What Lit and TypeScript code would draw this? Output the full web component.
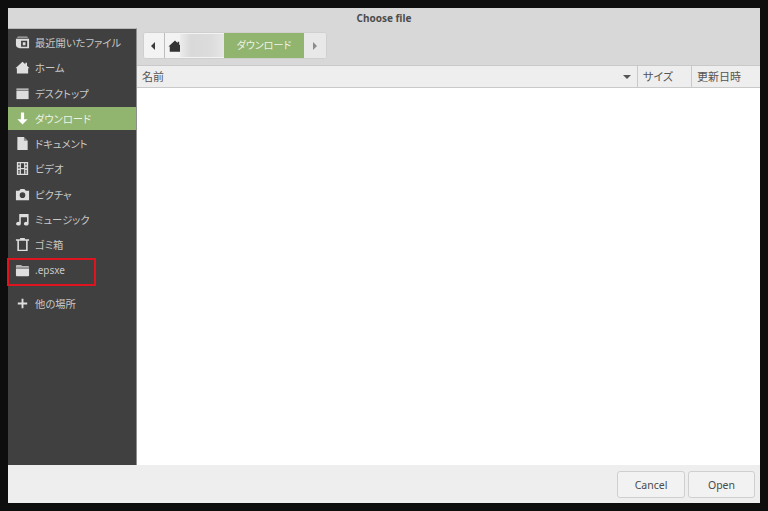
import { LitElement, html, css, svg } from "lit";
import { customElement } from "lit/decorators.js";

const icons: Record<string, unknown> = {
  recent: svg`<path d="M3 1.500h10l1 1.500H2z" opacity=".7"/><path fill-rule="evenodd" d="M1 4h14v10H5c-2 0-4-.8-4-3.500zM6.500 6v6.500h6.500V6zM8.300 7.800h2.900v3H8.300z"/>`,
  home: svg`<path d="M8 1.800 11 4.500V3h1.800v3.200L15.500 8.700h-1.500V14.500H2V8.700H.5z"/>`,
  desktop: svg`<path d="M1.500 2.500h13v2h-13z" opacity=".75"/><path d="M1.500 5h13v9h-13z"/>`,
  down: svg`<path d="M6.300 1.500h3.400v7.300H13.500L8 14.500 2.500 8.800h3.800z"/>`,
  doc: svg`<path d="M2.500 1h7l4 4v10h-11z"/><path d="M9.500 1v4h4z" fill="#404040" opacity=".5"/>`,
  video: svg`<path fill-rule="evenodd" d="M2 1h12v14H2zM3.500 2.500V4.500H5V2.500zM3.500 6V8H5V6zM3.500 9.500V11.500H5V9.500zM3.500 12V13.500H5V12zM11 2.500V4.500h1.500V2.500zM11 6V8h1.500V6zM11 9.500V11.500h1.500V9.500zM11 12v1.500h1.500V12zM6.300 2.500v5h3.400v-5zM6.300 8.800v4.700h3.400V8.800z"/>`,
  photo: svg`<path fill-rule="evenodd" d="M1 4h3.500L6 2.200h4L11.500 4H15v10H1zM8 5.700a3 3 0 1 0 0 6 3 3 0 0 0 0-6z"/>`,
  music: svg`<path d="M4.500 2h10v10.500a2.500 2 0 1 1-1.700-1.900V5.500H6.200v7a2.500 2 0 1 1-1.700-1.900z"/>`,
  trash: svg`<path fill-rule="evenodd" d="M5.500 1h5v1.500H15V4h-1.500v11h-11V4H1V2.500h4.500zM4.200 4v9.500h7.600V4z"/>`,
  folder: svg`<path d="M1 3c0-.6.4-1 1-1h4.500l1.300 1.300H14c.6 0 1 .4 1 1V5H1z" opacity=".75"/><path d="M1 5.800h14V13c0 .6-.4 1-1 1H2c-.6 0-1-.4-1-1z"/>`,
  plus: svg`<path d="M7 3h2v4h4v2H9v4H7V9H3V7h4z"/>`,
};

const places: [string, string][] = [
  ["recent", "最近開いたファイル"],
  ["home", "ホーム"],
  ["desktop", "デスクトップ"],
  ["down", "ダウンロード"],
  ["doc", "ドキュメント"],
  ["video", "ビデオ"],
  ["photo", "ピクチャ"],
  ["music", "ミュージック"],
  ["trash", "ゴミ箱"],
];

@customElement("app-root")
export class AppRoot extends LitElement {
  static styles = css`
    :host {
      display: block;
      width: 768px;
      height: 511px;
      background: #0e0e0e;
      overflow: hidden;
      font-family: "Noto Sans", "Noto Sans CJK JP", sans-serif;
    }
    .screen {
      box-sizing: border-box;
      width: 768px;
      height: 511px;
      padding: 8px;
    }
    .window {
      position: relative;
      height: 495px;
      display: flex;
      flex-direction: column;
      background: #eeeeee;
    }
    .head {
      flex: 0 0 20px;
      background: #d8d8d8;
      color: #4c4c4c;
      font-size: 10px;
      font-weight: 700;
      line-height: 20px;
      text-align: center;
    }
    .main {
      flex: 1;
      display: flex;
      min-height: 0;
    }
    .side {
      flex: 0 0 129px;
      box-sizing: border-box;
      background: #404040;
      border-right: 1px solid #8e8e8e;
      border-top: 1px solid #b8b8b8;
      padding-top: 2px;
      color: #c8c8c8;
      font-size: 10.300px;
      font-feature-settings: "palt";
    }
    .place {
      height: 23px;
      margin-bottom: 2.300px;
      display: flex;
      align-items: center;
      gap: 5px;
      padding-left: 7px;
      box-sizing: border-box;
    }
    .place svg {
      width: 15px;
      height: 15px;
      fill: #dedede;
      flex: none;
    }
    .place.active {
      background: #91b46f;
      color: #eef3e6;
    }
    .place.active svg {
      fill: #ffffff;
    }
    .place.other {
      margin-top: 10px;
    }
    .latin {
      font-size: 10px;
    }
    .content {
      flex: 1;
      min-width: 0;
      display: flex;
      flex-direction: column;
    }
    .toolbar {
      flex: 0 0 37px;
      background: #d8d8d8;
      display: flex;
      align-items: flex-start;
      padding: 4px 0 0 6px;
      box-sizing: border-box;
    }
    .path {
      height: 27px;
      width: 184px;
      box-sizing: border-box;
      border: 1px solid #cfcfcf;
      border-radius: 3px;
      display: flex;
      background: #f1f1f1;
      overflow: hidden;
    }
    .nav {
      flex: 0 0 21px;
      box-sizing: border-box;
      padding-right: 3px;
      display: flex;
      align-items: center;
      justify-content: center;
      border-right: 1px solid #bdbdbd;
      background: #f3f3f3;
    }
    .arrow {
      width: 0;
      height: 0;
      border-top: 4px solid transparent;
      border-bottom: 4px solid transparent;
    }
    .arrow.left {
      border-right: 4px solid #3a3a3a;
    }
    .arrow.right {
      border-left: 4px solid #8b8b8b;
    }
    .homecrumb {
      flex: 0 0 59px;
      position: relative;
      display: flex;
      align-items: center;
      padding-left: 3px;
      box-sizing: border-box;
      background: #f3f3f3;
    }
    .homecrumb svg {
      width: 14px;
      height: 14px;
      fill: #333333;
      flex: none;
    }
    .blur {
      position: absolute;
      left: 15px;
      right: 0;
      top: 1px;
      bottom: 1px;
      background: linear-gradient(90deg, #ececec 0%, #d9d9d9 25%, #dcdcdc 70%, #e6e6e6 100%);
    }
    .crumb {
      flex: 0 0 80px;
      background: #91b46f;
      color: #eef3e6;
      font-size: 10px;
      font-feature-settings: "palt";
      line-height: 25px;
      text-align: center;
    }
    .fwd {
      flex: 1;
      display: flex;
      align-items: center;
      justify-content: center;
      background: #e8e8e8;
    }
    .cols {
      flex: 0 0 23px;
      box-sizing: border-box;
      display: flex;
      background: #eeeeee;
      border-top: 1px solid #c9c9c9;
      border-bottom: 1px solid #c9c9c9;
      color: #555555;
      font-size: 11px;
      font-feature-settings: "palt";
      line-height: 21px;
    }
    .col {
      box-sizing: border-box;
      padding-left: 5px;
      border-right: 1px solid #c9c9c9;
      position: relative;
    }
    .name {
      flex: 1;
    }
    .size {
      flex: 0 0 54px;
    }
    .date {
      flex: 0 0 68px;
      border-right: 0;
    }
    .sort {
      position: absolute;
      right: 6px;
      top: 9px;
      width: 0;
      height: 0;
      border-left: 4.500px solid transparent;
      border-right: 4.500px solid transparent;
      border-top: 4px solid #555555;
    }
    .files {
      flex: 1;
      background: #ffffff;
    }
    .foot {
      flex: 0 0 38px;
      box-sizing: border-box;
      background: #eeeeee;
      display: flex;
      justify-content: flex-end;
      gap: 3px;
      padding: 6px 5px 5px 0;
    }
    button {
      box-sizing: border-box;
      width: 68px;
      height: 27px;
      padding: 0;
      border: 1px solid #cfcfcf;
      border-radius: 3px;
      background: #f2f2f2;
      color: #4a4a4a;
      font: 10.500px "Noto Sans", sans-serif;
    }
    button.open {
      width: 67px;
    }
    .mark {
      position: absolute;
      left: -1px;
      top: 250px;
      width: 89px;
      height: 28px;
      box-sizing: border-box;
      border: 2.500px solid #e0141e;
    }
  `;

  private icon(name: string) {
    return html`<svg viewBox="0 0 16 16" aria-hidden="true">${icons[name]}</svg>`;
  }

  render() {
    return html`
      <div class="screen">
        <div class="window">
          <div class="head">Choose file</div>
          <div class="main">
            <aside class="side">
              ${places.map(
                ([i, t]) => html`<div class="place ${i === "down" ? "active" : ""}">
                  ${this.icon(i)}<span>${t}</span>
                </div>`
              )}
              <div class="place">${this.icon("folder")}<span class="latin">.epsxe</span></div>
              <div class="place other">${this.icon("plus")}<span>他の場所</span></div>
            </aside>
            <section class="content">
              <div class="toolbar">
                <div class="path">
                  <div class="nav"><i class="arrow left"></i></div>
                  <div class="homecrumb">${this.icon("home")}<div class="blur"></div></div>
                  <div class="crumb">ダウンロード</div>
                  <div class="fwd"><i class="arrow right"></i></div>
                </div>
              </div>
              <div class="cols">
                <div class="col name">名前<i class="sort"></i></div>
                <div class="col size">サイズ</div>
                <div class="col date">更新日時</div>
              </div>
              <div class="files"></div>
            </section>
          </div>
          <div class="foot">
            <button>Cancel</button>
            <button class="open">Open</button>
          </div>
          <div class="mark"></div>
        </div>
      </div>
    `;
  }
}
